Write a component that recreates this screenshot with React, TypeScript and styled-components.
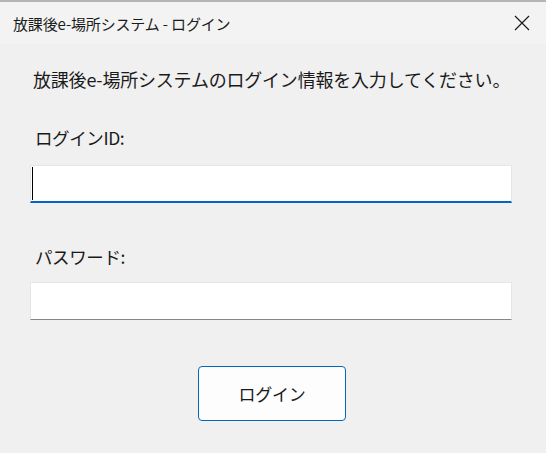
import React from 'react';
import styled, { createGlobalStyle } from 'styled-components';

const GlobalStyle = createGlobalStyle`
  html, body {
    margin: 0;
    padding: 0;
    background: #f0f0f0;
  }
  body {
    font-family: "Noto Sans CJK JP", "Noto Sans", sans-serif;
    color: #1a1a1a;
  }
`;

const Window = styled.div`
  width: 546px;
  height: 453px;
  box-sizing: border-box;
  border-top: 2px solid #b4b4b4;
  background: #f0f0f0;
  display: flex;
  flex-direction: column;
`;

const TitleBar = styled.div`
  height: 42px;
  background: #f3f3f3;
  display: flex;
  align-items: center;
  justify-content: space-between;
  padding-left: 13px;
  padding-right: 14px;
`;

const Title = styled.span`
  font-size: 15px;
  color: #1b1b1b;
  letter-spacing: -0.15px;
`;

const CloseButton = styled.div`
  width: 20px;
  height: 20px;
  display: flex;
  align-items: center;
  justify-content: center;
`;

const Content = styled.div`
  display: flex;
  flex-direction: column;
  padding: 23px 34px 0 30px;
`;

const Message = styled.div`
  padding-left: 3px;
  font-size: 18px;
  line-height: 24px;
  letter-spacing: -0.2px;
  margin-bottom: 35px;
`;

const Label = styled.div<{ $gap: number }>`
  padding-left: 5px;
  font-size: 17.5px;
  line-height: 24px;
  letter-spacing: -0.4px;
  margin-bottom: ${(p) => p.$gap}px;
`;

const Field = styled.div<{ $focused?: boolean }>`
  height: 38px;
  box-sizing: border-box;
  background: #ffffff;
  border: 1px solid #e6e6e6;
  border-bottom: ${(p) => (p.$focused ? '2px solid #0067c0' : '1px solid #868686')};
  display: flex;
  align-items: center;
  padding-left: 1px;
  margin-bottom: ${(p) => (p.$focused ? '42px' : '46px')};
`;

const Caret = styled.span`
  width: 1px;
  height: 33px;
  background: #000;
`;

const ButtonRow = styled.div`
  display: flex;
  justify-content: center;
  padding-left: 2px;
`;

const LoginButton = styled.button`
  width: 148px;
  height: 55px;
  box-sizing: border-box;
  background: #fdfdfd;
  border: 1.5px solid #0067c0;
  border-radius: 4px;
  font-family: inherit;
  font-size: 17px;
  color: #1a1a1a;
  letter-spacing: -0.3px;
  cursor: pointer;
`;

export default function App() {
  return (
    <>
      <GlobalStyle />
      <Window>
        <TitleBar>
          <Title>放課後e-場所システム - ログイン</Title>
          <CloseButton>
            <svg width="16" height="16" viewBox="0 0 16 16">
              <path d="M1 1 L15 15 M15 1 L1 15" stroke="#1a1a1a" strokeWidth="1.2" fill="none" />
            </svg>
          </CloseButton>
        </TitleBar>
        <Content>
          <Message>放課後e-場所システムのログイン情報を入力してください。</Message>
          <Label $gap={15}>ログインID:</Label>
          <Field $focused>
            <Caret />
          </Field>
          <Label $gap={13}>パスワード:</Label>
          <Field />
          <ButtonRow>
            <LoginButton>ログイン</LoginButton>
          </ButtonRow>
        </Content>
      </Window>
    </>
  );
}
